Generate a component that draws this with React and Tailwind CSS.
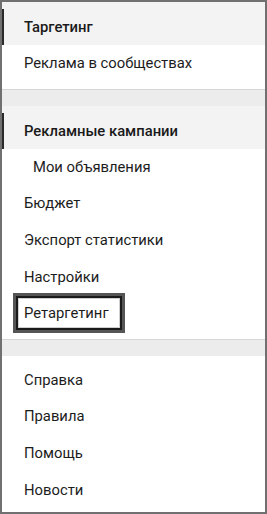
import React from "react";

const font = { fontFamily: "Roboto, 'Noto Sans', sans-serif" };

function Row({ children, bold, indent }) {
  return (
    <div
      className={`flex h-[36.6px] items-center ${indent ? "pl-[31px]" : "pl-[22px]"} text-[14.8px] text-[#1c1c1c] ${bold ? "font-medium" : ""}`}
    >
      {children}
    </div>
  );
}

function ActiveRow({ children }) {
  return (
    <div className="flex h-[36px] items-stretch">
      <div className="w-[2px] bg-[#2a2a2a]" />
      <div className="flex items-center pl-[20px] text-[14.8px] font-medium text-[#1a1a1a]">
        {children}
      </div>
    </div>
  );
}

function Separator() {
  return <div className="h-[17px] border-t border-[#d6d6d6] bg-[#ececec]" />;
}

export default function App() {
  return (
    <div
      style={font}
      className="flex h-[514px] w-[267px] flex-col border-2 border-[#707070] bg-white"
    >
      <div className="bg-[#f3f3f3] pt-[7px]">
        <ActiveRow>Таргетинг</ActiveRow>
      </div>
      <div className="pb-[7px]">
        <Row>Реклама в сообществах</Row>
      </div>
      <Separator />
      <div className="bg-[#f3f3f3] pt-[7px]">
        <ActiveRow>Рекламные кампании</ActiveRow>
      </div>
      <Row indent>Мои объявления</Row>
      <Row>Бюджет</Row>
      <Row>Экспорт статистики</Row>
      <Row>Настройки</Row>
      <div className="flex h-[36.6px] items-center pl-[11px]">
        <div className="flex h-[40px] w-[112px] shrink-0 items-center border-[3px] border-[#555555] pl-[8px] text-[14.8px] text-[#1c1c1c] shadow-[inset_0_0_0_2px_#1a1a1a,inset_0_0_0_3px_#cfcfcf]">
          Ретаргетинг
        </div>
      </div>
      <div className="h-[7px]" />
      <Separator />
      <div className="pt-[6px]">
        <Row>Справка</Row>
        <Row>Правила</Row>
        <Row>Помощь</Row>
        <Row>Новости</Row>
      </div>
    </div>
  );
}
